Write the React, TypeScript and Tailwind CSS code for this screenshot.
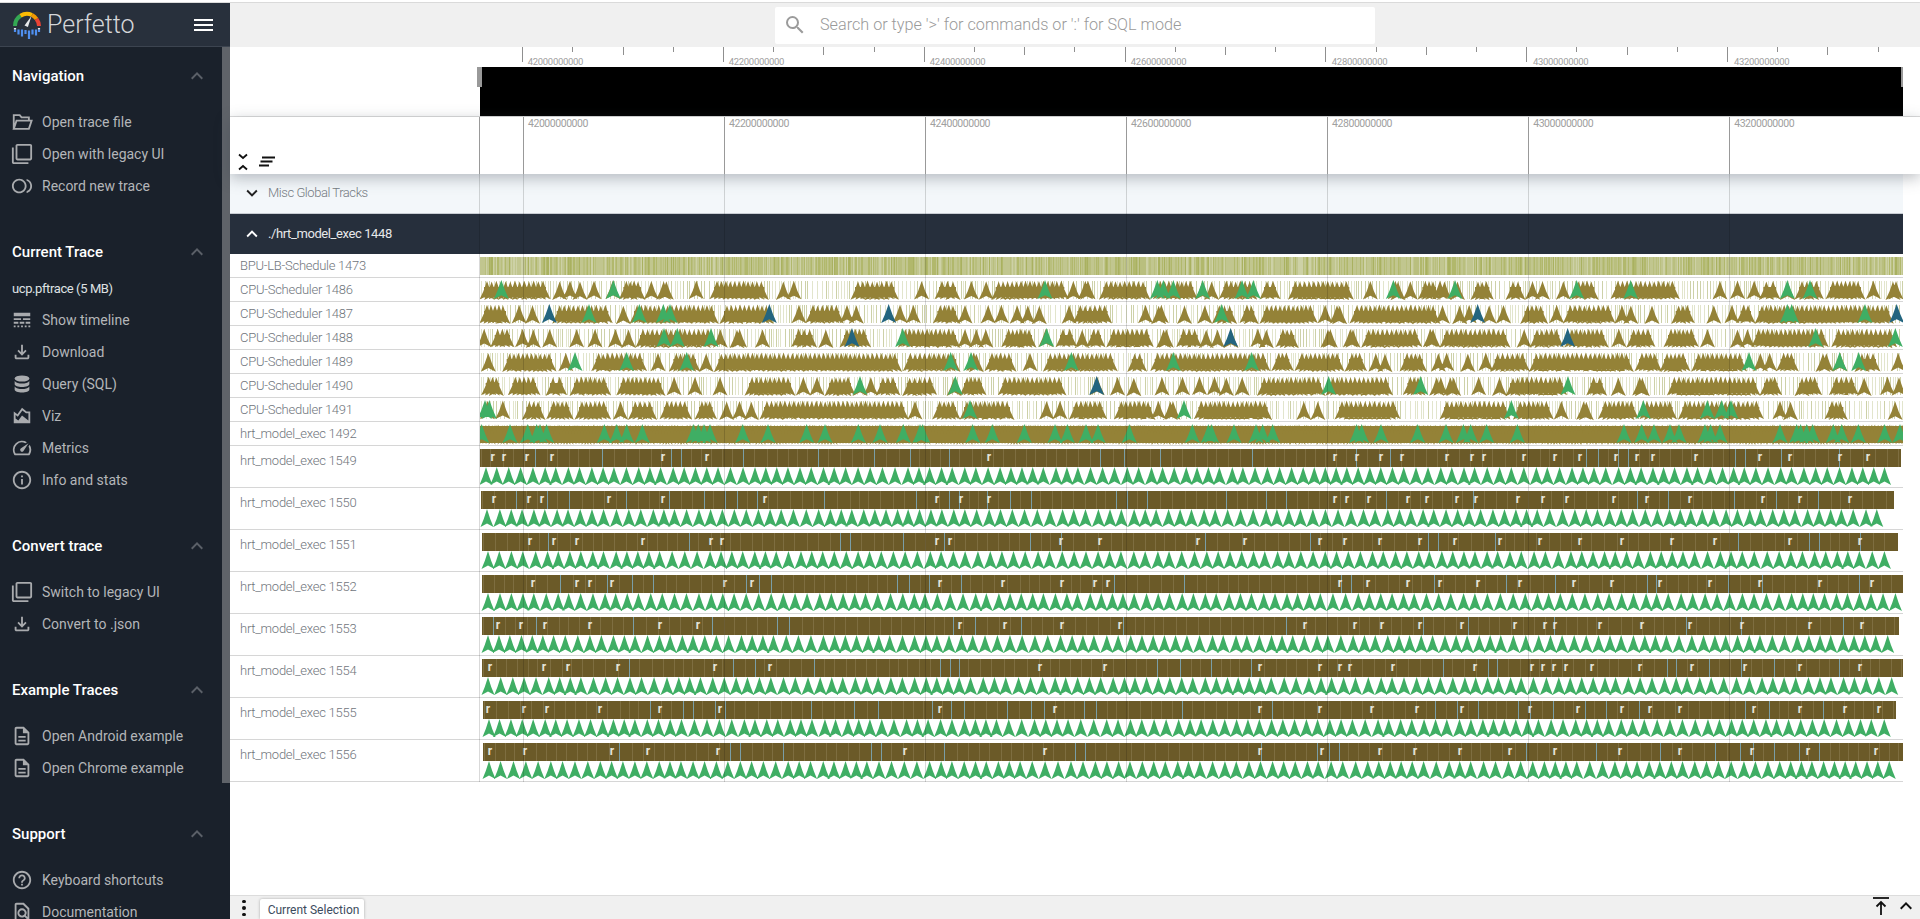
import type { ReactNode } from "react";
import {
  MdOutlineFilterNone,
  MdOutlineFiberSmartRecord,
  MdLineStyle,
  MdOutlineFileDownload,
  MdOutlineAreaChart,
  MdOutlineSpeed,
  MdOutlineInfo,
  MdOutlineDescription,
  MdHelpOutline,
  MdOutlineFindInPage,
  MdOutlineSearch,
  MdKeyboardArrowUp,
  MdKeyboardArrowDown,
} from "react-icons/md";

type Span = [number, number];
type ChunkRow = { spans: Span[]; green: number[]; blue?: number[] };

const CHART_W = 1423;
const CHART_X = 480;
const MAJOR_TICKS = [523, 724, 925.1, 1126.1, 1327.1, 1528.2, 1729.2];
const TICK_LABELS = ["42000000000", "42200000000", "42400000000", "42600000000", "42800000000", "43000000000", "43200000000"];

const OLIVE = "#948237";
const GREEN = "#3fae64";
const BLUE = "#23657f";

const rng = (seed: number) => {
  let s = seed;
  return () => {
    s = (s * 16807) % 2147483647;
    return (s - 1) / 2147483646;
  };
};

const chev = (x: number, top: number, w: number, h: number, waist = 0.25) =>
  `M${x} ${top}L${x + w * waist} ${top + h * 0.55}L${x + w / 2} ${top + h}L${x} ${top + h * 0.8}L${x - w / 2} ${top + h}L${x - w * waist} ${top + h * 0.55}Z`;

// three crops of the reference, values are crop px (1/3 of a real px)
const chunkBases = [480, 960, 1430];
const chunks: ChunkRow[][] = [
  [
    { spans: [[0,210],[228,250],[255,285],[288,312],[322,362],[382,415],[418,495],[503,525],[530,580],[635,663],[690,865],[898,922],[925,958],[1113,1255],[1312,1338],[1365,1440]], green: [64,400] },
    { spans: [[0,90],[105,130],[145,170],[218,397],[415,445],[450,715],[720,880],[942,972],[978,1090],[1090,1112],[1118,1140],[1240,1280],[1288,1312],[1360,1440]], green: [327,478,550,570], blue: [208,868,1226] },
    { spans: [[0,25],[32,102],[115,140],[145,175],[188,230],[275,305],[332,358],[385,428],[433,458],[468,705],[710,732],[750,800],[835,860],[935,1010],[1025,1050],[1080,1172],[1255,1440]], green: [552,592,693,1268], blue: [1116] },
    { spans: [[2,48],[68,228],[245,270],[335,500],[510,558],[568,660],[667,690],[703,1265],[1270,1440]], green: [285,440,620,1412] },
    { spans: [[5,70],[85,180],[198,260],[270,392],[410,555],[570,595],[630,660],[707,733],[795,945],[950,990],[992,1030],[1035,1125],[1130,1150],[1160,1185],[1188,1260],[1268,1370],[1405,1440]], green: [1140,1426] },
    { spans: [[5,40],[52,85],[127,195],[200,280],[285,392],[408,435],[445,530],[540,635],[645,710],[725,755],[765,792],[803,825],[840,1285],[1290,1320],[1358,1440]], green: [15,28] },
    { spans: [], green: [5,90,143,170,180,200,373,410,440,487,640,655,672,690,788,864,980,1035,1135,1200,1270,1320,1328] },
  ],
  [
    { spans: [[20,48],[67,90],[95,325],[330,350],[355,405],[418,570],[580,712],[715,740],[745,765],[778,890],[900,960],[985,1180],[1210,1252],[1285,1335],[1340,1362],[1375,1440]], green: [255,592,610,640,728,846,880,1300] },
    { spans: [[0,30],[67,102],[108,140],[158,185],[192,215],[218,258],[315,340],[340,455],[543,570],[575,625],[652,695],[722,747],[757,830],[840,895],[900,1072],[1083,1108],[1110,1160],[1170,1440]], green: [785] },
    { spans: [[0,30],[38,60],[65,90],[125,228],[240,275],[288,350],[355,378],[380,435],[440,580],[590,640],[650,725],[727,750],[760,785],[800,826],[882,905],[908,930],[948,1015],[1083,1132],[1150,1200],[1205,1385],[1390,1440]], green: [260], blue: [812] },
    { spans: [[20,70],[75,168],[197,223],[250,472],[503,560],[572,930],[935,1000],[1005,1152],[1155,1220],[1235,1260],[1262,1288],[1320,1400],[1430,1440]], green: [33,334,640,875] },
    { spans: [[0,78],[115,318],[398,425],[460,485],[508,535],[592,620],[650,685],[702,735],[752,775],[778,820],[825,868],[892,1095],[1098,1298],[1330,1395],[1420,1440]], green: [1106,1382], blue: [410] },
    { spans: [[0,162],[242,278],[285,315],[328,440],[463,585],[585,605],[610,660],[703,935],[1018,1045],[1052,1095],[1125,1320]], green: [30,672] },
    { spans: [], green: [38,97,193,285,322,378,414,508,697,745,755,822,888,908,938,1190,1205,1263,1373] },
  ],
  [
    { spans: [[30,30],[32,55],[60,105],[123,190],[228,285],[295,320],[325,350],[388,412],[425,505],[543,748],[858,882],[910,935],[960,985],[988,1050],[1060,1085],[1095,1180],[1188,1305],[1315,1345],[1368,1419]], green: [75,440,602,1072,1140] },
    { spans: [[30,45],[78,100],[105,130],[165,190],[208,233],[272,353],[365,395],[400,555],[565,587],[590,615],[642,690],[725,793],[838,865],[892,920],[920,975],[975,1390]], green: [1072,1085,1305], blue: [143,1400] },
    { spans: [[30,240],[270,295],[300,400],[405,535],[555,578],[590,675],[702,805],[820,845],[910,935],[940,965],[965,1195],[1205,1400]], green: [1157,1396], blue: [413] },
    { spans: [[30,70],[95,132],[155,180],[182,298],[298,610],[615,695],[690,780],[785,950],[980,1002],[1008,1030],[1040,1105],[1158,1210],[1215,1245],[1275,1350],[1390,1419]], green: [957,1229,1286] },
    { spans: [[30,35],[40,92],[122,170],[195,222],[228,410],[470,530],[547,583],[608,658],[712,990],[990,1055],[1095,1175],[1198,1285],[1290,1315],[1360,1385],[1395,1419]], green: [414] },
    { spans: [[30,240],[250,370],[380,408],[440,490],[505,625],[630,740],[745,1000],[1038,1062],[1068,1095],[1185,1252],[1372,1419]], green: [244,640,832,875,903] },
    { spans: [], green: [48,100,122,170,262,582,635,672,720,747,825,842,870,1050,1100,1112,1130,1148,1210,1235,1285,1364,1410] },
  ],
];

const denseNames = ["CPU-Scheduler 1486", "CPU-Scheduler 1487", "CPU-Scheduler 1488", "CPU-Scheduler 1489", "CPU-Scheduler 1490", "CPU-Scheduler 1491", "hrt_model_exec 1492"];

const sliceRows = [
  { name: "hrt_model_exec 1549", start: 480, end: 1901, rs: [492.7,504,527,552,663,707,989,1335,1357,1381,1402,1447,1472,1484,1524,1555,1580,1616,1637,1653,1696,1760,1790,1840,1868] },
  { name: "hrt_model_exec 1550", start: 481, end: 1894, rs: [494,529,542,609,663,765,937,961,989,1335,1347,1369,1408,1427,1457,1476,1518,1543,1567,1614,1647,1690,1763,1800,1850] },
  { name: "hrt_model_exec 1551", start: 482, end: 1898, rs: [530,554,577,643,711,722,937,950,1061,1100,1198,1245,1320,1345,1380,1420,1455,1500,1540,1580,1622,1672,1715,1790,1860] },
  { name: "hrt_model_exec 1552", start: 482, end: 1903, rs: [533,577,590,612,725,752,940,1003,1062,1095,1108,1340,1368,1408,1440,1478,1520,1574,1612,1660,1710,1760,1820,1872] },
  { name: "hrt_model_exec 1553", start: 482, end: 1899, rs: [498,521,545,590,660,698,960,1005,1062,1120,1305,1355,1382,1420,1462,1515,1545,1555,1600,1642,1690,1742,1810,1862] },
  { name: "hrt_model_exec 1554", start: 482, end: 1903, rs: [490,544,568,618,715,770,1040,1105,1260,1320,1340,1350,1393,1475,1532,1543,1554,1566,1592,1640,1692,1745,1800,1860] },
  { name: "hrt_model_exec 1555", start: 483, end: 1896, rs: [488,524,547,600,660,720,940,1055,1260,1320,1372,1417,1462,1530,1578,1622,1650,1680,1754,1800,1845,1879] },
  { name: "hrt_model_exec 1556", start: 483, end: 1903, rs: [490,525,612,648,718,905,1045,1260,1322,1380,1415,1460,1510,1555,1620,1680,1752,1808,1876] },
];

const BpuChart = () => {
  const r = rng(77);
  const colors = ["#c1c68f", "#b1b86c", "#cdd1a6", "#b9bf7e", "#a9b160"];
  const d: string[] = colors.map(() => "");
  for (let x = 0; x < CHART_W; x++) {
    const v = r();
    const i = v < 0.42 ? 0 : v < 0.6 ? 1 : v < 0.72 ? 2 : v < 0.94 ? 3 : 4;
    d[i] += `M${x + 0.5} 3V21`;
  }
  return (
    <svg width={CHART_W} height={23} className="block">
      {colors.map((c, i) => (
        <path key={c} d={d[i]} stroke={c} strokeWidth={1} fill="none" />
      ))}
    </svg>
  );
};

const DenseChart = ({ index }: { index: number }) => {
  const r = rng(1000 + index * 37);
  let pale = "";
  let mid = "";
  for (let x = 1; x < CHART_W; ) {
    if (r() < 0.55) pale += `M${x + 0.5} 3V21`;
    else mid += `M${x + 0.5} 3V21`;
    x += 2 + Math.floor(r() * 4);
  }
  let olive = "";
  let green = "";
  let blue = "";
  const solid = index === 6;
  if (solid) {
    for (let x = 0; x < CHART_W; x += 3) {
      olive += chev(x, 2 + r() * 1.5, 7, 19.5);
    }
  }
  chunks.forEach((rows, c) => {
    const base = chunkBases[c] - CHART_X;
    const row = rows[index];
    row.spans.forEach(([s, e]) => {
      const a = base + s / 3 + 7;
      const b = base + e / 3 - 7;
      const n = Math.max(0, Math.round((b - a) / 4.5));
      for (let k = 0; k <= n; k++) {
        const x = n === 0 ? (a + b) / 2 : a + ((b - a) * k) / n;
        olive += chev(x, 2.5 + r() * 1.2, 15, 18.5, 0.24);
      }
      // body of the cluster, the chevrons overlap into a solid band
      if (b - a > 4) olive += `M${a - 3} 9H${b + 3}V19.500H${a - 3}Z`;
    });
    row.green.forEach((g) => (green += chev(base + g / 3, 2, 15, 19)));
    (row.blue ?? []).forEach((g) => (blue += chev(base + g / 3, 2, 15, 19)));
  });
  return (
    <svg width={CHART_W} height={23} className="block">
      <path d={pale} stroke="#e2e5cc" strokeWidth={1} fill="none" />
      <path d={mid} stroke="#cdd1a8" strokeWidth={1} fill="none" />
      {solid ? <rect x={0} y={4} width={CHART_W} height={17} fill={OLIVE} /> : null}
      <path d={olive} fill={OLIVE} />
      <path d={green} fill={GREEN} />
      <path d={blue} fill={BLUE} />
    </svg>
  );
};

const SliceChart = ({ row, index }: { row: (typeof sliceRows)[number]; index: number }) => {
  const r = rng(5000 + index * 91);
  const x0 = row.start - CHART_X;
  const x1 = row.end - CHART_X;
  let seps = "";
  let blues = "";
  for (let x = x0 + 1 + r() * 8; x < x1 - 2; ) {
    if (r() < 0.2) blues += `M${Math.round(x) + 0.5} 3V21`;
    else seps += `M${Math.round(x) + 0.5} 3V21`;
    x += 9 + r() * 4;
  }
  let arrows = "";
  for (let x = x0 + 6; x < x1 - 7; ) {
    arrows += chev(x, 21, 13, 18, 0.25);
    x += 10.5 + r() * 2.5;
  }
  return (
    <svg width={CHART_W} height={41} className="block">
      <rect x={x0} y={3} width={x1 - x0} height={18} fill="#6b5a28" />
      <path d={seps} stroke="#7e6e40" strokeWidth={1} fill="none" />
      <path d={blues} stroke="#7a9ea6" strokeWidth={1} fill="none" />
      <path d={arrows} fill={GREEN} />
      {row.rs.map((x) => (
        <text key={x} x={x - CHART_X} y={15} fontSize={12} fontWeight={700} fill="#e6e4da" fontFamily="Roboto, sans-serif" textAnchor="middle">
          r
        </text>
      ))}
    </svg>
  );
};

const FolderIcon = () => (
  <svg width={22} height={22} viewBox="0 0 24 24" fill="none" stroke="currentColor" strokeWidth="2">
    <path d="M3 19.500V4.500h6.500l2 2.500H19.500v3M3 19.500L6 10.500H22.500L19.500 19.500z" />
  </svg>
);

const DbIcon = () => (
  <svg width={22} height={22} viewBox="0 0 24 24" fill="currentColor">
    <ellipse cx="12" cy="6" rx="8" ry="3.400" />
    <path d="M4 8.600c1.400 1.900 4.600 2.800 8 2.800s6.600-.9 8-2.800V12c0 1.900-3.600 3.400-8 3.400S4 13.900 4 12z" />
    <path d="M4 14.600c1.400 1.900 4.600 2.800 8 2.800s6.600-.9 8-2.800V18c0 1.900-3.600 3.400-8 3.400S4 19.900 4 18z" />
  </svg>
);

const Logo = () => (
  <svg width={30} height={30} viewBox="0 0 30 30" className="shrink-0" fill="none">
    <path d="M3 16A12 12 0 0 1 8.500 5.800" stroke="#34a853" strokeWidth="4" />
    <path d="M8.500 5.800A12 12 0 0 1 20 5" stroke="#fbbc04" strokeWidth="4" />
    <path d="M20 5A12 12 0 0 1 24.500 9" stroke="#f29900" strokeWidth="4" />
    <path d="M24.500 9A12 12 0 0 1 27 16" stroke="#ea4335" strokeWidth="4" />
    <path d="M12.500 15.500l7-9.500-3.600 11z" fill="#e8eaed" />
    <path d="M3 19.500v2.500M6.500 19.500v5M10 19.500v7M13.500 20v4M17 20.500v8.500M20.500 19.500v5M24 19.500v6M27 19.500v2.500" stroke="#4f8ff0" strokeWidth="2.200" />
    <path d="M3 18v1.500M27 18v1.500" stroke="#e8eaed" strokeWidth="2.200" />
  </svg>
);

const NavItem = ({ icon, label }: { icon: ReactNode; label: string }) => (
  <div className="flex h-8 items-center pl-[11px] text-[14px] text-[#b4b6b9]">
    <span className="flex w-[31px] shrink-0 items-center text-[#a9abae]">{icon}</span>
    <span>{label}</span>
  </div>
);

const Section = ({ title, children }: { title: string; children: ReactNode }) => (
  <section className="mb-[38px]">
    <div className="flex h-6 items-center justify-between pl-3 pr-[21px]">
      <h2 className="text-[15px] font-medium text-white">{title}</h2>
      <MdKeyboardArrowUp size={24} className="text-[#5b6068]" />
    </div>
    {children}
  </section>
);

const Sidebar = () => (
  <aside className="relative flex h-full w-[230px] shrink-0 flex-col overflow-hidden bg-[#1a212b]">
    <header className="flex h-[44px] shrink-0 items-center border-b border-[#3c4450] bg-[#28303c] pl-3 pr-[17px]">
      <Logo />
      <span className="ml-[5px] text-[25px] font-light text-[#d4d6d9]">Perfetto</span>
      <span className="ml-auto flex w-[19px] flex-col gap-[3px]">
        <span className="h-[2px] bg-white" />
        <span className="h-[2px] bg-white" />
        <span className="h-[2px] bg-white" />
      </span>
    </header>
    <div className="pt-[17px]">
      <Section title="Navigation">
        <div className="mt-[18px]">
          <NavItem icon={<FolderIcon />} label="Open trace file" />
          <NavItem icon={<MdOutlineFilterNone size={22} />} label="Open with legacy UI" />
          <NavItem icon={<MdOutlineFiberSmartRecord size={22} />} label="Record new trace" />
        </div>
      </Section>
      <Section title="Current Trace">
        <div className="mb-1 mt-[14px] flex h-[22px] items-center pl-3 text-[13px] tracking-[-0.4px] text-[#dfe1e3]">ucp.pftrace (5 MB)</div>
        <NavItem icon={<MdLineStyle size={22} />} label="Show timeline" />
        <NavItem icon={<MdOutlineFileDownload size={22} />} label="Download" />
        <NavItem icon={<DbIcon />} label="Query (SQL)" />
        <NavItem icon={<MdOutlineAreaChart size={22} />} label="Viz" />
        <NavItem icon={<MdOutlineSpeed size={22} />} label="Metrics" />
        <NavItem icon={<MdOutlineInfo size={22} />} label="Info and stats" />
      </Section>
      <Section title="Convert trace">
        <div className="mt-[18px]">
          <NavItem icon={<MdOutlineFilterNone size={22} />} label="Switch to legacy UI" />
          <NavItem icon={<MdOutlineFileDownload size={22} />} label="Convert to .json" />
        </div>
      </Section>
      <Section title="Example Traces">
        <div className="mt-[18px]">
          <NavItem icon={<MdOutlineDescription size={22} />} label="Open Android example" />
          <NavItem icon={<MdOutlineDescription size={22} />} label="Open Chrome example" />
        </div>
      </Section>
      <Section title="Support">
        <div className="mt-[18px]">
          <NavItem icon={<MdHelpOutline size={22} />} label="Keyboard shortcuts" />
          <NavItem icon={<MdOutlineFindInPage size={22} />} label="Documentation" />
        </div>
      </Section>
    </div>
    {/* scrollbar thumb */}
    <div className="absolute right-0 top-[44px] h-[736px] w-2 bg-[#5f6369]" />
  </aside>
);

const Overview = () => (
  <div className="relative h-[70px] w-full shrink-0 border-b border-[#dcdcdc] bg-white">
    {Array.from({ length: 29 }, (_, i) => {
      const x = 522.2 + i * 50.2 - 230;
      const kind = i % 4;
      const h = kind === 0 ? 15 : kind === 2 ? 8 : 5;
      return <div key={i} className="absolute top-0 w-px bg-[#8f8f8f]" style={{ left: x, height: h }} />;
    })}
    {TICK_LABELS.map((t, i) => (
      <span
        key={t}
        className="absolute top-[9px] text-[9.5px] leading-[11px] tracking-[-0.3px] text-[#a0a0a0]"
        style={{ left: MAJOR_TICKS[i] - 225.3 }}
      >
        {t}
      </span>
    ))}
    <div className="absolute bottom-0 left-[250px] top-[20px] w-[1423px] bg-black" />
    <div className="absolute left-[247px] top-[20px] h-5 w-[5px] bg-[#999]" />
    <div className="absolute left-[1671px] top-[20px] h-5 w-[2px] bg-[#999]" />
  </div>
);

const CollapseIcon = () => (
  <svg width={14} height={18} viewBox="0 0 14 18" fill="none" stroke="#111" strokeWidth="1.800">
    <path d="M3 1.500l4 3.500 4-3.500M3 16.500l4-3.500 4 3.500" />
  </svg>
);

const SortIcon = () => (
  <svg width={20} height={12} viewBox="0 0 20 12" fill="none" stroke="#111" strokeWidth="2">
    <path d="M5 1.500h13M3.500 5.500h12M2 9.500h10" />
  </svg>
);

const TimeScale = () => (
  <div className="relative z-20 flex h-[57px] w-full shrink-0 items-end bg-white pb-[3px] pl-[6px] shadow-[0_4px_14px_rgba(60,70,80,0.35)]">
    <div className="flex items-center gap-[7px]">
      <CollapseIcon />
      <SortIcon />
    </div>
    <div className="absolute bottom-0 left-[248.500px] top-0 w-[1.500px] bg-[#999]" />
    {MAJOR_TICKS.map((x, i) => (
      <div key={x}>
        <div className="absolute bottom-0 top-0 w-px bg-[#999]" style={{ left: x - 230 }} />
        <span
          className="absolute top-[1px] text-[10.500px] leading-[12px] tracking-[-0.45px] text-[#a0a0a0]"
          style={{ left: x - 225 }}
        >
          {TICK_LABELS[i]}
        </span>
      </div>
    ))}
  </div>
);

const TrackRow = ({ name, tall, children }: { name: string; tall?: boolean; children: ReactNode }) => (
  <div className={`flex border-b border-[#d6d6d6] ${tall ? "h-[42px]" : "h-6"}`}>
    <div className={`w-[250px] shrink-0 pl-[10px] text-[13px] font-light tracking-[-0.02em] text-[#6f757c] ${tall ? "pt-[4px]" : "pt-px"} leading-[21px]`}>
      {name}
    </div>
    {children}
  </div>
);

const Tracks = () => (
  <div className="relative w-[1673px]">
    <div className="flex h-10 items-center border-b border-[#c8cdd3] bg-[#f3f7fa] pb-[2px] pl-[11px] text-[13px] font-light tracking-[-0.45px] text-[#757b82]">
      <MdKeyboardArrowDown size={22} className="text-[#222]" />
      <span className="ml-[5px]">Misc Global Tracks</span>
    </div>
    <div className="flex h-10 items-center bg-[#262f3c] pl-[11px] text-[13px] tracking-[-0.4px] text-[#e6e8ea]">
      <MdKeyboardArrowUp size={22} className="text-white" />
      <span className="ml-[5px]">./hrt_model_exec 1448</span>
    </div>
    <TrackRow name="BPU-LB-Schedule 1473">
      <BpuChart />
    </TrackRow>
    {denseNames.map((name, i) => (
      <TrackRow key={name} name={name}>
        <DenseChart index={i} />
      </TrackRow>
    ))}
    {sliceRows.map((row, i) => (
      <TrackRow key={row.name} name={row.name} tall>
        <SliceChart row={row} index={i} />
      </TrackRow>
    ))}
    {/* grid lines lie over the track canvas */}
    <div className="absolute bottom-0 left-[249px] top-0 w-px bg-black/15" />
    {MAJOR_TICKS.map((x) => (
      <div key={x} className="absolute bottom-0 top-0 w-px bg-black/15" style={{ left: x - 230 }} />
    ))}
  </div>
);

const Drawer = () => (
  <footer className="flex h-6 shrink-0 items-end border-t border-[#dcdcdc] bg-[#f0f0f0] pl-[12px]">
    <span className="mb-[3px] flex flex-col gap-[3px]">
      <span className="size-[3.500px] rounded-full bg-[#111]" />
      <span className="size-[3.500px] rounded-full bg-[#111]" />
      <span className="size-[3.500px] rounded-full bg-[#111]" />
    </span>
    <div className="ml-[14px] flex h-5 w-[104px] items-center justify-center rounded-t-[2px] bg-white pl-1 pt-[2px] text-[12px] text-[#3c4b5d] shadow-[0_0_3px_rgba(0,0,0,0.3)]">
      Current Selection
    </div>
    <div className="ml-auto flex items-center gap-[4px] pb-px pr-[2px]">
      <svg width={18} height={20} viewBox="0 0 18 20" fill="none" stroke="#111" strokeWidth="1.800">
        <path d="M1 2h16" />
        <path d="M9 19V6M4.500 10.500L9 6l4.500 4.500" />
      </svg>
      <MdKeyboardArrowUp size={24} className="text-[#111]" />
    </div>
  </footer>
);

export default function App() {
  return (
    <div className="flex h-[919px] w-[1920px] flex-col overflow-hidden bg-white [font-family:Roboto,sans-serif]">
      <div className="h-[3px] shrink-0 border-b border-[#dcdcdc] bg-white" />
      <div className="flex min-h-0 flex-1">
        <Sidebar />
        <main className="flex min-w-0 flex-1 flex-col">
          <div className="flex h-11 shrink-0 items-center justify-center bg-[#f0f0f0] shadow-[0_1px_2px_rgba(0,0,0,0.15)]">
            <div className="flex h-[37px] w-[600px] items-center rounded-[2px] bg-white pl-2">
              <MdOutlineSearch size={24} className="text-[#9b9b9b]" />
              <span className="ml-[13px] text-[16.200px] font-light text-[#9a9a9a]">
                Search or type &apos;&gt;&apos; for commands or &apos;:&apos; for SQL mode
              </span>
            </div>
          </div>
          <Overview />
          <TimeScale />
          <div className="min-h-0 flex-1 overflow-hidden">
            <Tracks />
          </div>
          <Drawer />
        </main>
      </div>
    </div>
  );
}
